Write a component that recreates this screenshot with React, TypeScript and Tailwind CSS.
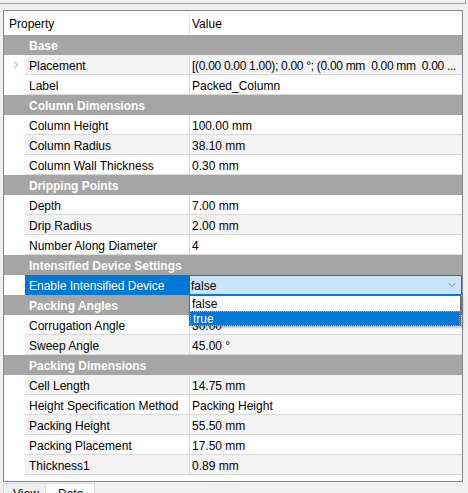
import { ChevronDown, ChevronRight } from 'lucide-react';

type Row = { group?: string; name?: string; value?: string; expand?: boolean; selected?: boolean };

const rows: Row[] = [
    { group: 'Base' },
    { name: 'Placement', value: '[(0.00 0.00 1.00); 0.00 °; (0.00 mm  0.00 mm  0.00 ...', expand: true },
    { name: 'Label', value: 'Packed_Column' },
    { group: 'Column Dimensions' },
    { name: 'Column Height', value: '100.00 mm' },
    { name: 'Column Radius', value: '38.10 mm' },
    { name: 'Column Wall Thickness', value: '0.30 mm' },
    { group: 'Dripping Points' },
    { name: 'Depth', value: '7.00 mm' },
    { name: 'Drip Radius', value: '2.00 mm' },
    { name: 'Number Along Diameter', value: '4' },
    { group: 'Intensified Device Settings' },
    { name: 'Enable Intensified Device', value: '', selected: true },
    { group: 'Packing Angles' },
    { name: 'Corrugation Angle', value: '30.00 °' },
    { name: 'Sweep Angle', value: '45.00 °' },
    { group: 'Packing Dimensions' },
    { name: 'Cell Length', value: '14.75 mm' },
    { name: 'Height Specification Method', value: 'Packing Height' },
    { name: 'Packing Height', value: '55.50 mm' },
    { name: 'Packing Placement', value: '17.50 mm' },
    { name: 'Thickness1', value: '0.89 mm' },
];

export default function App() {
    return (
        <div
            className="relative w-[468px] h-[493px] overflow-hidden bg-[#f0f0f0] text-[12px] text-[#000]"
            style={{ fontFamily: '"Liberation Sans", Arial, sans-serif' }}
        >
            <div className="h-[4px] w-[466px] border-b border-r border-[#a0a0a0]" />
            <div className="ml-[3px] mt-[6px] w-[460px] h-[472px] border border-[#82878f] bg-white">
                <div className="flex h-[24px] items-center pt-[2px]">
                    <div className="w-[185px] shrink-0 h-full flex items-center pl-[5px]">Property</div>
                    <div className="h-full flex items-center pl-[2px] border-l border-[#e5e5e5]">Value</div>
                </div>
                {rows.map((r, i) =>
                    r.group ? (
                        <div key={i} className="h-[20px] bg-[#a5a5a5] flex items-center pt-[2px] pl-[25px] text-white font-bold">
                            {r.group}
                        </div>
                    ) : (
                        <div key={i} className="h-[20px] flex">
                            <div className="w-[21px] shrink-0 h-full flex items-center justify-center pl-[2px] text-[#707070]">
                                {r.expand && <ChevronRight size={12} strokeWidth={1.5} />}
                            </div>
                            <div
                                className={`flex-1 min-w-0 flex h-full border-b ${
                                    r.selected ? 'border-[#0078d7]' : 'border-[#d9d9d9]'
                                } ${i % 2 === 1 ? 'bg-[#f3f3f3]' : 'bg-white'}`}
                            >
                                <div
                                    className={`w-[164px] shrink-0 h-full flex items-center pt-[2px] pl-[4px] ${
                                        r.selected ? 'bg-[#0078d7] text-white' : ''
                                    }`}
                                >
                                    {r.name}
                                </div>
                                <div
                                    className={`flex-1 min-w-0 h-full flex items-center pt-[2px] pl-[2px] border-l border-[#d9d9d9] whitespace-pre overflow-hidden ${
                                        r.expand ? 'tracking-[-0.3px]' : ''
                                    }`}
                                >
                                    {r.value}
                                </div>
                            </div>
                        </div>
                    )
                )}
            </div>
            <div className="flex h-[12px] mt-[1px] ml-[3px]">
                <div className="w-[43px] h-full border border-b-0 border-[#d9d9d9] bg-[#f0f0f0] pl-[9px] pt-[3px] leading-[14px]">
                    View
                </div>
                <div className="w-[49px] h-full bg-white border-t border-r border-[#d9d9d9] pl-[12px] pt-[3px] leading-[14px]">
                    Data
                </div>
            </div>

            {/* combo box editor */}
            <div className="absolute left-[189px] top-[275px] w-[273px] h-[20px] bg-[#cce4f7] border border-[#0078d7] flex items-center pt-[1px] pl-[1px]">
                <span>false</span>
                <ChevronDown size={12} strokeWidth={1.5} className="absolute right-[3px] top-[3px] text-[#606060]" />
            </div>
            {/* open dropdown list */}
            <div className="absolute left-[189px] top-[295px] w-[272px] h-[31px] bg-white border border-[#646464] shadow-[2px_2px_2px_rgba(0,0,0,0.25)]">
                <div className="h-[15px] flex items-center pl-[2px]">false</div>
                <div className="h-[15px] flex items-center pl-[2px] bg-[#0078d7] text-white border border-dotted border-[#f0a030]">
                    true
                </div>
            </div>
        </div>
    );
}
